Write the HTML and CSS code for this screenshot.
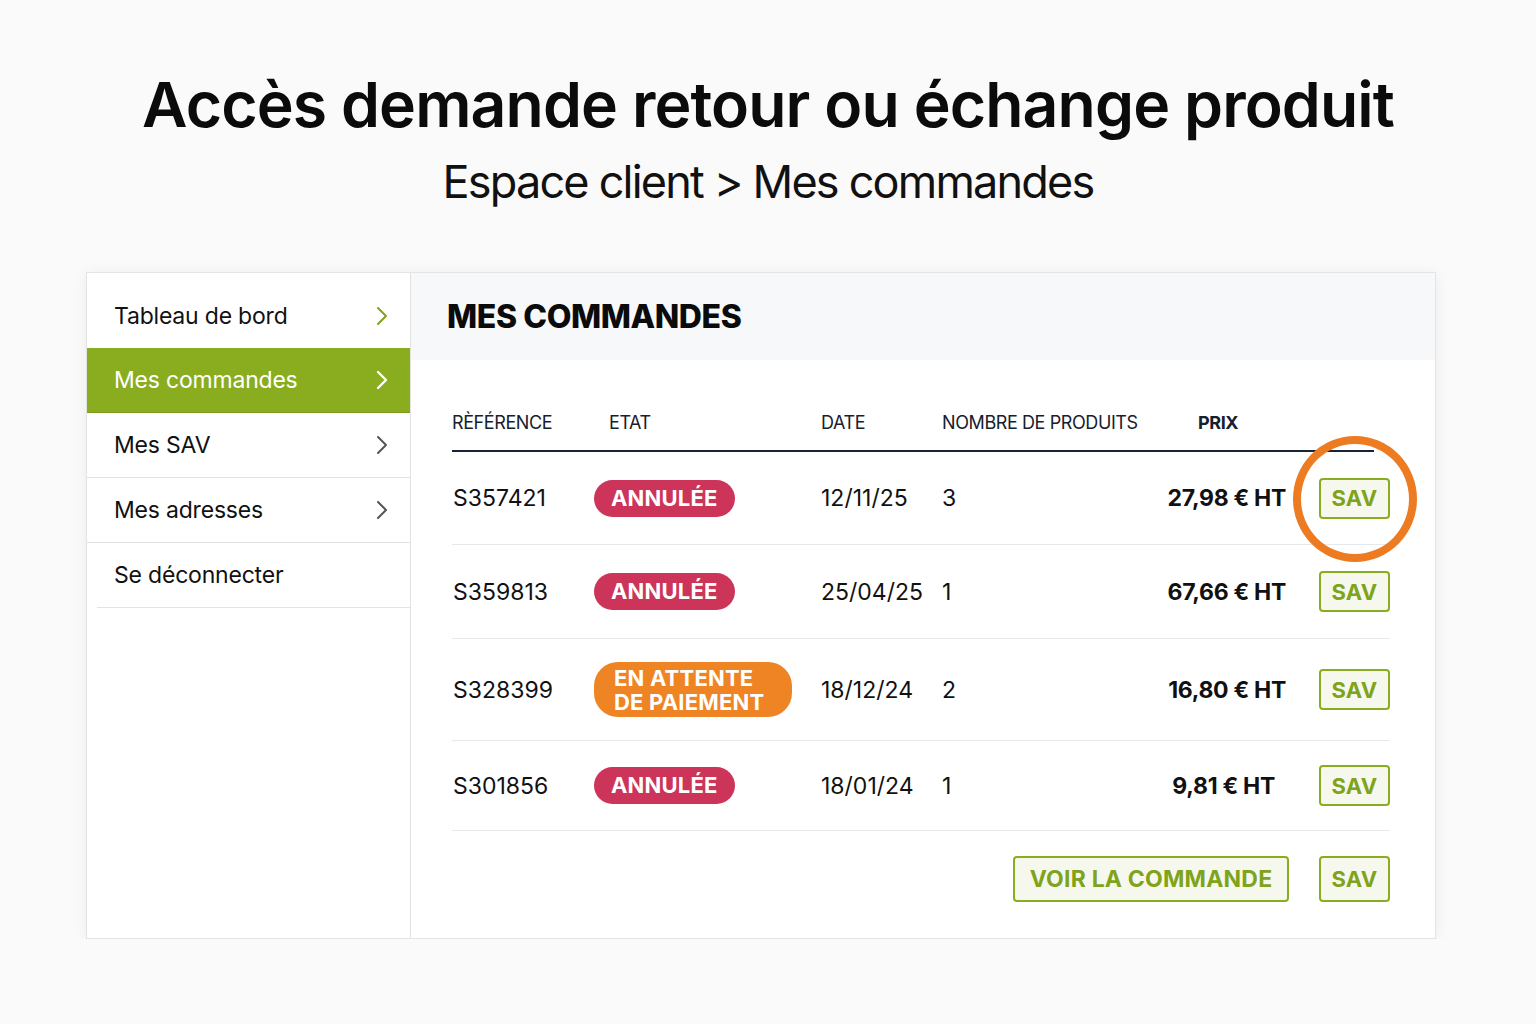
FILE: index.html
```html
<!DOCTYPE html>
<html lang="fr">
<head>
<meta charset="utf-8">
<title>Accès demande retour ou échange produit</title>
<link rel="stylesheet" href="styles.css">
</head>
<body>
<header class="intro">
  <h1 class="title">Accès demande retour ou échange produit</h1>
  <p class="subtitle">Espace client &gt; Mes commandes</p>
</header>

<section class="card">
  <nav class="sidebar">
    <a class="nav-item nav-first">Tableau de bord
      <svg class="chev" viewBox="0 0 12 20"><path d="M2 2 L10 10 L2 18"/></svg></a>
    <a class="nav-item nav-active">Mes commandes
      <svg class="chev" viewBox="0 0 12 20"><path d="M2 2 L10 10 L2 18"/></svg></a>
    <a class="nav-item">Mes SAV
      <svg class="chev" viewBox="0 0 12 20"><path d="M2 2 L10 10 L2 18"/></svg></a>
    <a class="nav-item">Mes adresses
      <svg class="chev" viewBox="0 0 12 20"><path d="M2 2 L10 10 L2 18"/></svg></a>
    <a class="nav-item nav-last">Se déconnecter</a>
  </nav>

  <div class="main">
    <div class="main-head"><h2>MES COMMANDES</h2></div>
    <div class="table">
      <div class="row thead">
        <span>RÈFÉRENCE</span>
        <span class="th-etat">ETAT</span>
        <span>DATE</span>
        <span>NOMBRE DE PRODUITS</span>
        <span class="th-price">PRIX</span>
        <span></span>
      </div>

      <div class="row r1">
        <span class="ref">S357421</span>
        <span><em class="badge red">ANNULÉE</em></span>
        <span>12/11/25</span>
        <span>3</span>
        <span class="price">27,98 € HT</span>
        <span class="sav-cell"><button class="btn sav">SAV</button><i class="ring"></i></span>
      </div>
      <div class="row r2">
        <span class="ref">S359813</span>
        <span><em class="badge red">ANNULÉE</em></span>
        <span>25/04/25</span>
        <span>1</span>
        <span class="price">67,66 € HT</span>
        <span class="sav-cell"><button class="btn sav">SAV</button></span>
      </div>
      <div class="row r3">
        <span class="ref">S328399</span>
        <span><em class="badge orange">EN ATTENTE<br>DE PAIEMENT</em></span>
        <span>18/12/24</span>
        <span>2</span>
        <span class="price">16,80 € HT</span>
        <span class="sav-cell"><button class="btn sav">SAV</button></span>
      </div>
      <div class="row r4">
        <span class="ref">S301856</span>
        <span><em class="badge red">ANNULÉE</em></span>
        <span>18/01/24</span>
        <span>1</span>
        <span class="price price-short">9,81 € HT</span>
        <span class="sav-cell"><button class="btn sav">SAV</button></span>
      </div>

      <div class="foot">
        <button class="btn voir">VOIR LA COMMANDE</button>
        <button class="btn sav sav-lg">SAV</button>
      </div>
    </div>
  </div>
</section>
</body>
</html>
```

FILE: styles.css
```css
* { box-sizing: border-box; }

html, body {
  margin: 0;
  padding: 0;
  background: #fafafa;
  font-family: Inter, "Noto Sans", "Liberation Sans", sans-serif;
  color: #111;
}

.intro {
  text-align: center;
  padding-top: 66px;
}

.title {
  margin: 0;
  font-size: 62.5px;
  font-weight: 600;
  letter-spacing: -0.9px;
  line-height: 76px;
  color: #0b0b0b;
}

.subtitle {
  margin: 10px 0 0;
  font-size: 45px;
  font-weight: 400;
  letter-spacing: -1.8px;
  line-height: 60px;
  color: #111;
}

.card {
  display: flex;
  width: 1350px;
  height: 667px;
  margin: 60px 0 0 86px;
  background: #fff;
  border: 1px solid #e4e4e4;
  box-shadow: 0 2px 14px rgba(0,0,0,0.06);
}

/* Sidebar */
.sidebar {
  width: 324px;
  flex: none;
  display: flex;
  flex-direction: column;
  padding-top: 10px;
  border-right: 1px solid #e2e2e2;
}

.nav-item {
  display: flex;
  align-items: center;
  justify-content: space-between;
  height: 65px;
  padding: 0 22px 0 27px;
  font-size: 23px;
  letter-spacing: -0.2px;
  color: #111;
  border-bottom: 1px solid #e3e3e3;
}

.nav-first { border-bottom: none; }

.nav-active {
  background: #8aad1f;
  color: #fff;
  border-bottom: 1px solid #7c9d19;
}

.nav-last {
  margin-left: 10px;
  padding-left: 17px;
  border-bottom: 1px solid #e3e3e3;
}

.chev {
  width: 12px;
  height: 20px;
  fill: none;
  stroke: #555;
  stroke-width: 2;
  stroke-linecap: round;
  stroke-linejoin: round;
}
.nav-first .chev { stroke: #7fa31a; }
.nav-active .chev { stroke: #fff; stroke-width: 2.4; }

/* Main */
.main {
  flex: 1;
  min-width: 0;
  display: flex;
  flex-direction: column;
}

.main-head {
  height: 87px;
  background: #f7f8fa;
  padding: 0 36px;
  display: flex;
  align-items: center;
}

.main-head h2 {
  margin: 0;
  font-size: 32px;
  font-weight: 800;
  letter-spacing: -0.4px;
  color: #0b0b0b;
}

.table {
  padding: 40px 45px 0 41px;
}

.row {
  display: grid;
  grid-template-columns: 142px 227px 121px minmax(0, 1fr) 200px 104px;
  align-items: center;
  font-size: 23px;
  color: #111;
  border-bottom: 1px solid #e6e8eb;
  white-space: nowrap;
}

.thead {
  height: 52px;
  font-size: 18px;
  color: #17202e;
  letter-spacing: -0.4px;
  border-bottom: 2px solid #16233a;
  margin-right: 16px;
  grid-template-columns: 142px 227px 121px minmax(0, 1fr) 200px 88px;
  padding-bottom: 6px;
}

.th-etat { padding-left: 15px; }
.th-price { font-weight: 700; padding-left: 112px; }

.r1 { height: 93px; }
.r2 { height: 94px; }
.r3 { height: 102px; }
.r4 { height: 90px; }

.ref { padding-left: 1px; }

.price {
  font-weight: 700;
  text-align: right;
  letter-spacing: -0.3px;
}
.price-short { padding-right: 11px; }

.sav-cell {
  position: relative;
  display: flex;
  justify-content: flex-end;
}

.badge {
  display: inline-block;
  font-style: normal;
  font-weight: 700;
  color: #fff;
  font-size: 22px;
  letter-spacing: 0.2px;
  border-radius: 20px;
  line-height: 24px;
}

.badge.red {
  background: #cc3459;
  padding: 6px 17px 7px;
}

.badge.orange {
  background: #ef8424;
  padding: 4px 28px 3px 20px;
  border-radius: 24px;
}

.btn {
  font-family: inherit;
  font-weight: 700;
  color: #7fa31a;
  background: #f6f8ee;
  border: 2px solid #8aad1f;
  border-radius: 4px;
  font-size: 22px;
  letter-spacing: 0.2px;
  cursor: pointer;
}

.sav {
  width: 71px;
  height: 41px;
  padding: 0;
}

.sav-lg { height: 46px; }

.ring {
  position: absolute;
  right: -27px;
  top: -42px;
  width: 124px;
  height: 126px;
  border: 8px solid #ec7b22;
  border-radius: 50%;
  pointer-events: none;
}

.foot {
  display: flex;
  justify-content: flex-end;
  gap: 30px;
  padding-top: 25px;
}

.voir {
  width: 276px;
  height: 46px;
  font-size: 23px;
}
```
